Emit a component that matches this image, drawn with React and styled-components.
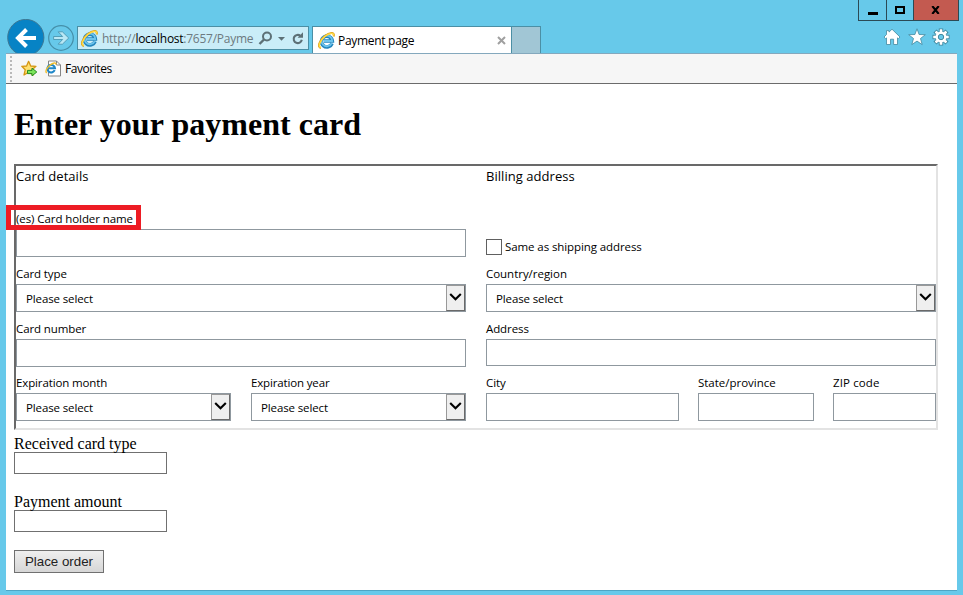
import React from "react";
import styled, { createGlobalStyle } from "styled-components";

const ui = `"Open Sans", "Noto Sans", sans-serif`;
const serif = `"Liberation Serif", "Times New Roman", serif`;

const GlobalStyle = createGlobalStyle`
  *, *::before, *::after { box-sizing: border-box; }
  body { margin: 0; background: #67c9ea; overflow: hidden; }
  svg { display: block; flex: none; }
  input, button { margin: 0; padding: 0; border-radius: 0; appearance: none; outline: none; }
`;

const Window = styled.div`
  width: 963px;
  height: 595px;
  display: flex;
  flex-direction: column;
  padding: 0 6px 4px;
  background: #67c9ea;
  color: #000;
  font-family: ${ui};
`;

const Chrome = styled.header`
  height: 53px;
  display: flex;
  align-items: flex-start;
  overflow: hidden;
  margin-right: -2px;
`;

const NavButtons = styled.div`
  width: 71px;
  height: 53px;
  padding-top: 19px;
`;

const AddressBar = styled.div`
  width: 232px;
  height: 24px;
  margin-top: 26px;
  display: flex;
  align-items: center;
  padding-left: 3px;
  background: #caedf8;
  border: 1px solid #4b8fa5;
`;

const Url = styled.span`
  width: 153px;
  margin-left: 4px;
  padding-top: 2px;
  font-size: 12px;
  line-height: 20px;
  letter-spacing: -0.26px;
  color: #6d7a80;
  white-space: nowrap;
  b { font-weight: 400; color: #000; }
`;

const AddressActions = styled.div`
  display: flex;
  align-items: center;
  margin-left: 3px;
`;

const Tab = styled.div`
  width: 200px;
  height: 27px;
  margin: 26px 0 0 3px;
  display: flex;
  align-items: center;
  padding: 1px 5px 0;
  background: #fff;
  border: 1px solid #4b8fa5;
  border-bottom: 0;
`;

const TabTitle = styled.span`
  flex: 1;
  margin-left: 3px;
  padding-top: 1px;
  font-size: 12px;
  line-height: 18px;
  letter-spacing: -0.3px;
`;

const NewTab = styled.div`
  width: 29px;
  height: 27px;
  margin-top: 26px;
  background: #a1c6d5;
  border: 1px solid #4b8fa5;
  border-width: 1px 1px 0 0;
`;

const Corner = styled.div`
  margin-left: auto;
  display: flex;
  flex-direction: column;
`;

const Controls = styled.div`
  display: flex;
  border: 1px solid #2b4a55;
  border-top: 0;
  height: 21px;
`;

const Control = styled.div`
  width: ${(p) => p.$width}px;
  display: grid;
  place-items: center;
  background: ${(p) => p.$bg || "transparent"};
  & + & { border-left: 1px solid #2b4a55; }
`;

const Tools = styled.div`
  display: flex;
  gap: 6.5px;
  margin: 7px 0 0 25px;
`;

const FavoritesBar = styled.div`
  height: 31px;
  display: flex;
  align-items: center;
  background: #f6f6f6;
  border-top: 1px solid #84a8bd;
  border-bottom: 1px solid #6b6b6b;
  padding-left: 4px;
`;

const Grip = styled.div`
  width: 2px;
  height: 26px;
  margin-right: 9px;
  background: repeating-linear-gradient(#b9b9b9 0 2px, transparent 2px 4px);
`;

const IconGap = styled.span`
  width: 7px;
`;

const FavoriteLabel = styled.span`
  margin-left: 3px;
  font-size: 12px;
  letter-spacing: -0.45px;
`;

const Page = styled.main`
  flex: 1;
  padding: 21px 19px 0 8px;
  background: #fff;
  border-bottom: 1px solid #4fa5c4;
`;

const Heading = styled.h1`
  margin: 0 0 22px;
  font: bold 32px/38px ${serif};
  height: 37px;
  letter-spacing: 0.03px;
`;

const Frame = styled.form`
  width: 924px;
  height: 266px;
  display: grid;
  grid-template-columns: 450px 450px;
  gap: 20px;
  border: 2px solid;
  border-color: #696969 #e3e3e3 #e3e3e3 #696969;
`;

const Column = styled.section`
  display: grid;
  grid-template-rows: 20px 71px 55px 55px 54px;
`;

const SectionTitle = styled.div`
  font-size: 13px;
  line-height: 20px;
  letter-spacing: 0.05px;
`;

const Row = styled.div`
  display: grid;
  grid-template-columns: ${(p) => p.$columns || "1fr"};
  gap: ${(p) => p.$gap || 20}px;
  align-items: end;
`;

const Field = styled.label`
  display: block;
  position: relative;
  padding-bottom: ${(p) => p.$below || 0}px;
`;

const FieldLabel = styled.span`
  display: block;
  height: 16px;
  margin-bottom: 2px;
  font-size: 11.5px;
  line-height: 16px;
  letter-spacing: ${(p) => p.$spacing ?? -0.1}px;
  white-space: nowrap;
`;

const TextInput = styled.input`
  display: block;
  width: 100%;
  height: ${(p) => p.$height || 28}px;
  background: #fff;
  border: 1px solid #8f989f;
`;

const SelectBox = styled.div`
  height: 28px;
  display: flex;
  justify-content: space-between;
  padding-left: 9px;
  border: 1px solid #8f989f;
  font-size: 11.5px;
  line-height: 27px;
  letter-spacing: -0.12px;
`;

const SelectArrow = styled.span`
  width: 19px;
  display: grid;
  place-items: center;
  background: #efefef;
  border: 1px solid;
  border-color: #999 #696969 #696969 #999;
`;

const Highlight = styled.div`
  position: absolute;
  left: -10px;
  top: -6px;
  width: 135px;
  height: 25px;
  border: 5px solid #ed1c24;
`;

const CheckRow = styled.label`
  display: flex;
  align-items: center;
  align-self: end;
  height: 16px;
  margin-bottom: 2px;
  font-size: 11.5px;
  line-height: 16px;
  letter-spacing: -0.09px;
  white-space: nowrap;
`;

const Checkbox = styled.input`
  width: 16px;
  height: 16px;
  margin-right: 3px !important;
  border: 1px solid #606060;
  background: #fff;
`;

const PlainField = styled.label`
  display: block;
  height: 40px;
  margin-top: ${(p) => p.$top}px;
  font: 16px/18px ${serif};
`;

const PlainLabel = styled.span`
  display: block;
  height: 18px;
  line-height: 19px;
`;

const PlainInput = styled.input`
  display: block;
  width: 153px;
  height: 22px;
  border: 1px solid #707070;
  background: #fff;
`;

const OrderButton = styled.button`
  display: block;
  width: 90px;
  height: 23px;
  margin-top: 18px !important;
  border: 1px solid #707070;
  background: linear-gradient(#efefef, #d6d6d6);
  color: #222;
  font: 13.33px/20px "Liberation Sans", Arial, sans-serif;
`;

const IELogo = () => (
  <svg width="17" height="17" viewBox="0 0 17 17" fill="none">
    <path d="M14 11.4A5.4 5.4 0 1 1 14.3 9H6" stroke="#2486bd" strokeWidth="3.6" />
    <path d="M13.7 11.2A5.3 5.3 0 1 1 14.2 9H6" stroke="#6cc3ec" strokeWidth="1.8" />
    <path d="M3 16C-1 15.4 1.2 8.6 6.6 4.3 11.4.4 17 -.4 15.7 4.4" stroke="#dfa21c" strokeWidth="2" />
    <path d="M2.8 15.7C-.3 14.5 1.9 8.6 6.8 4.5 11.2 .9 16.3 .1 15.5 3.6" stroke="#ffdb45" strokeWidth="1.4" />
  </svg>
);

const NavArrows = () => (
  <svg width="71" height="34" viewBox="6 19 71 34" fill="none">
    <circle cx="25.8" cy="37.5" r="18.1" fill="#0783c5" stroke="#3d7894" strokeWidth="1" />
    <path d="M36 38H18.5M26.5 29.5L18 38L26.5 46.5" stroke="#fff" strokeWidth="4" />
    <circle cx="61" cy="38" r="12.3" stroke="#458fa9" strokeWidth="1.2" />
    <path d="M53.6 36.5H62.6L58.2 31.8H62.4L68.7 38L62.4 44.2H58.2L62.6 39.5H53.6Z" fill="#b9e8f5" stroke="#458fa9" strokeWidth=".8" />
  </svg>
);

const AddressIcons = () => (
  <svg width="46" height="16" viewBox="258 30 46 16" fill="none" stroke="#5d7076">
    <circle cx="267" cy="36.5" r="4" strokeWidth="2" />
    <path d="M264 39.5L259.5 44" strokeWidth="2.4" />
    <path d="M278 37H285L281.5 40.8Z" fill="#5d7076" stroke="none" />
    <path d="M300.4 35.8A4.1 4.1 0 1 0 301.8 39.8" strokeWidth="2.1" />
    <path d="M297.6 37.8H303V32.2Z" fill="#5d7076" stroke="none" />
  </svg>
);

const HomeIcon = () => (
  <svg width="18" height="18" viewBox="0 0 18 18">
    <path d="M9 1.2L17 9L15.4 10.7L14.5 9.9V16.5H10.6V11.2H7.5V16.5H3.5V9.9L2.6 10.7L1 9L3.5 6.5V2.6H6V4.1Z" fill="#fff" stroke="#42899f" strokeWidth=".8" />
  </svg>
);

const StarIcon = () => (
  <svg width="18" height="18" viewBox="0 0 18 18">
    <path d="M9 .8L11.1 6.5L17.3 6.7L12.5 10.5L14.2 16.6L9 13.1L3.8 16.6L5.5 10.5L.7 6.7L6.9 6.5Z" fill="#fff" stroke="#42899f" strokeWidth=".8" />
  </svg>
);

const teeth = [0, 45, 90, 135, 180, 225, 270, 315];

const GearIcon = () => (
  <svg width="18" height="18" viewBox="0 0 18 18">
    {teeth.map((a) => (
      <rect key={a} x="7.3" y="1" width="3.4" height="4" fill="#fff" stroke="#42899f" transform={`rotate(${a} 9 9)`} />
    ))}
    <circle cx="9" cy="9" r="5.8" fill="#fff" stroke="#42899f" strokeWidth=".6" />
    {teeth.map((a) => (
      <rect key={a} x="7.8" y="1.5" width="2.4" height="4" fill="#fff" transform={`rotate(${a} 9 9)`} />
    ))}
    <circle cx="9" cy="9" r="2.7" fill="#67c9ea" stroke="#42899f" />
  </svg>
);

const AddFavoriteIcon = () => (
  <svg width="17" height="17" viewBox="0 0 17 17">
    <path d="M7.6 1.3L9.7 6L15 6.3L11 9.8L12.2 15L7.6 12.2L3 15L4.2 9.8L.8 6.3L5.6 6Z" fill="#ffe071" stroke="#d49613" strokeWidth="1.3" strokeLinejoin="round" />
    <path d="M6.5 10.4H11V8.1L15.8 12L11 15.9V13.6H6.5Z" fill="#7be35a" stroke="#258d22" strokeWidth="1" />
  </svg>
);

const PageIcon = () => (
  <svg width="17" height="17" viewBox="0 0 17 17" fill="none">
    <path d="M3.5 1H11.5L15.5 5V16H3.5Z" fill="#fff" stroke="#858585" />
    <path d="M11.5 1V5H15.5" stroke="#858585" />
    <path d="M9.7 10.2A3.8 3.8 0 1 1 10 8.3H3.7" stroke="#1f87c8" strokeWidth="2.1" />
    <path d="M1.8 13C-.2 11.8 1.8 7.7 4.9 5.2 8 2.6 11.4 2 10.8 4.6" stroke="#f2bd28" strokeWidth="1.4" />
  </svg>
);

const Select = () => (
  <SelectBox>
    Please select
    <SelectArrow>
      <svg width="13" height="12" viewBox="0 0 13 12" fill="none">
        <path d="M1.2 2L6.5 7.3L11.8 2" stroke="#000" strokeWidth="2.1" />
      </svg>
    </SelectArrow>
  </SelectBox>
);

const LabeledField = ({ label, spacing, select, height, below, highlighted }) => (
  <Field $below={below}>
    <FieldLabel $spacing={spacing}>{label}</FieldLabel>
    {select ? <Select /> : <TextInput type="text" $height={height} />}
    {highlighted && <Highlight />}
  </Field>
);

export default function App() {
  return (
    <>
      <GlobalStyle />
      <Window>
        <Chrome>
          <NavButtons><NavArrows /></NavButtons>
          <AddressBar>
            <IELogo />
            <Url>http://<b>localhost</b>:7657/Payme</Url>
            <AddressActions><AddressIcons /></AddressActions>
          </AddressBar>
          <Tab>
            <IELogo />
            <TabTitle>Payment page</TabTitle>
            <svg width="9" height="9" viewBox="0 0 9 9"><path d="M1 1L8 8M8 1L1 8" stroke="#a0a0a0" strokeWidth="2" /></svg>
          </Tab>
          <NewTab />
          <Corner>
            <Controls>
              <Control $width={27}>
                <svg width="10" height="11"><path d="M0 8.5H10" stroke="#000" strokeWidth="3" /></svg>
              </Control>
              <Control $width={27}>
                <svg width="10" height="8"><rect x="1" y="1" width="8" height="6" fill="none" stroke="#000" strokeWidth="2" /></svg>
              </Control>
              <Control $width={45} $bg="#c35a50">
                <svg width="10" height="8" viewBox="0 0 10 8"><path d="M1.3 0L7.7 8M7.7 0L1.3 8" stroke="#000" strokeWidth="2.1" /></svg>
              </Control>
            </Controls>
            <Tools><HomeIcon /><StarIcon /><GearIcon /></Tools>
          </Corner>
        </Chrome>
        <FavoritesBar>
          <Grip />
          <AddFavoriteIcon />
          <IconGap />
          <PageIcon />
          <FavoriteLabel>Favorites</FavoriteLabel>
        </FavoritesBar>
        <Page>
          <Heading>Enter your payment card</Heading>
          <Frame>
            <Column>
              <SectionTitle>Card details</SectionTitle>
              <Row><LabeledField label="(es) Card holder name" spacing={-0.08} highlighted /></Row>
              <Row><LabeledField label="Card type" select /></Row>
              <Row><LabeledField label="Card number" /></Row>
              <Row $columns="1fr 1fr">
                <LabeledField label="Expiration month" spacing={-0.13} select />
                <LabeledField label="Expiration year" spacing={-0.15} select />
              </Row>
            </Column>
            <Column>
              <SectionTitle>Billing address</SectionTitle>
              <CheckRow><Checkbox type="checkbox" />Same as shipping address</CheckRow>
              <Row><LabeledField label="Country/region" spacing={-0.03} select /></Row>
              <Row><LabeledField label="Address" height={27} below={1} /></Row>
              <Row $columns="193px 116px 103px" $gap={19}>
                <LabeledField label="City" />
                <LabeledField label="State/province" spacing={-0.02} />
                <LabeledField label="ZIP code" spacing={0.12} />
              </Row>
            </Column>
          </Frame>
          <PlainField $top={4}><PlainLabel>Received card type</PlainLabel><PlainInput type="text" /></PlainField>
          <PlainField $top={18}><PlainLabel>Payment amount</PlainLabel><PlainInput type="text" /></PlainField>
          <OrderButton type="button">Place order</OrderButton>
        </Page>
      </Window>
    </>
  );
}
